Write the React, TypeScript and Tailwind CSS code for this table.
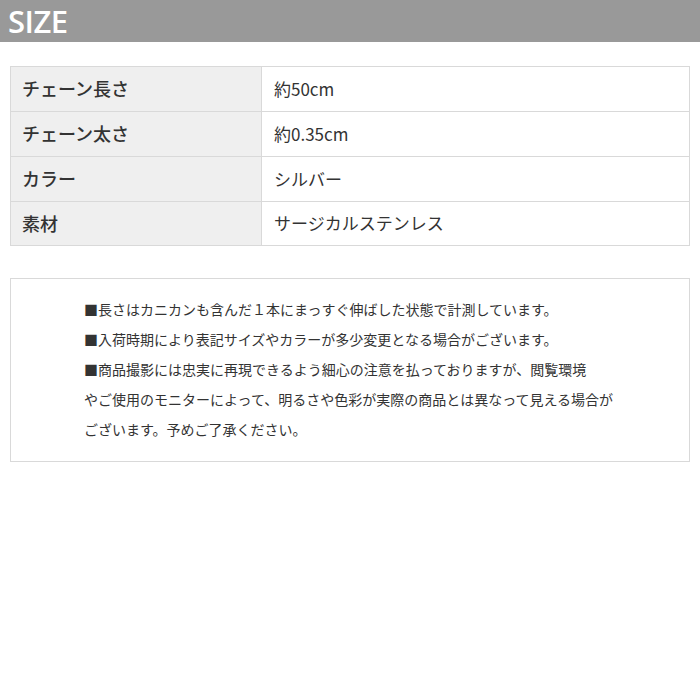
import React from "react";

const rows: [string, string, string][] = [
  ["チェーン長さ", "約50cm", "h-[44px]"],
  ["チェーン太さ", "約0.35cm", "h-[45px] border-t border-[#d9d9d9]"],
  ["カラー", "シルバー", "h-[45px] border-t border-[#d9d9d9]"],
  ["素材", "サージカルステンレス", "h-[44px] border-t border-[#d9d9d9]"],
];

const notes = [
  "■長さはカニカンも含んだ１本にまっすぐ伸ばした状態で計測しています。",
  "■入荷時期により表記サイズやカラーが多少変更となる場合がございます。",
  "■商品撮影には忠実に再現できるよう細心の注意を払っておりますが、閲覧環境",
  "やご使用のモニターによって、明るさや色彩が実際の商品とは異なって見える場合が",
  "ございます。予めご了承ください。",
];

export default function App() {
  return (
    <div
      className="w-[700px] h-[700px] bg-white"
      style={{ fontFamily: '"Noto Sans CJK JP", sans-serif' }}
    >
      <div className="h-[42px] bg-[#999999] flex items-center pl-[8px]">
        <span
          className="text-white text-[31px] font-semibold leading-none tracking-[-0.5px]"
          style={{ fontFamily: '"Open Sans", sans-serif' }}
        >
          SIZE
        </span>
      </div>
      <div className="px-[10px] pt-[24px]">
        <div className="border border-[#d9d9d9]">
          {rows.map(([k, v, cls]) => (
            <div key={k} className={`flex ${cls}`}>
              <div className="w-[251px] bg-[#efefef] border-r border-[#d9d9d9] flex items-center pl-[11px] pb-[1px] text-[18px] font-medium text-[#333]">
                {k}
              </div>
              <div className="flex-1 flex items-center pl-[12px] pb-[1px] text-[17px] text-[#333]">
                {v}
              </div>
            </div>
          ))}
        </div>
        <div className="mt-[32px] border border-[#d9d9d9] h-[184px] pt-[15px] pl-[73px]">
          {notes.map((n) => (
            <div key={n} className="h-[30px] flex items-center text-[14px] text-[#333] whitespace-nowrap">
              {n}
            </div>
          ))}
        </div>
      </div>
    </div>
  );
}
